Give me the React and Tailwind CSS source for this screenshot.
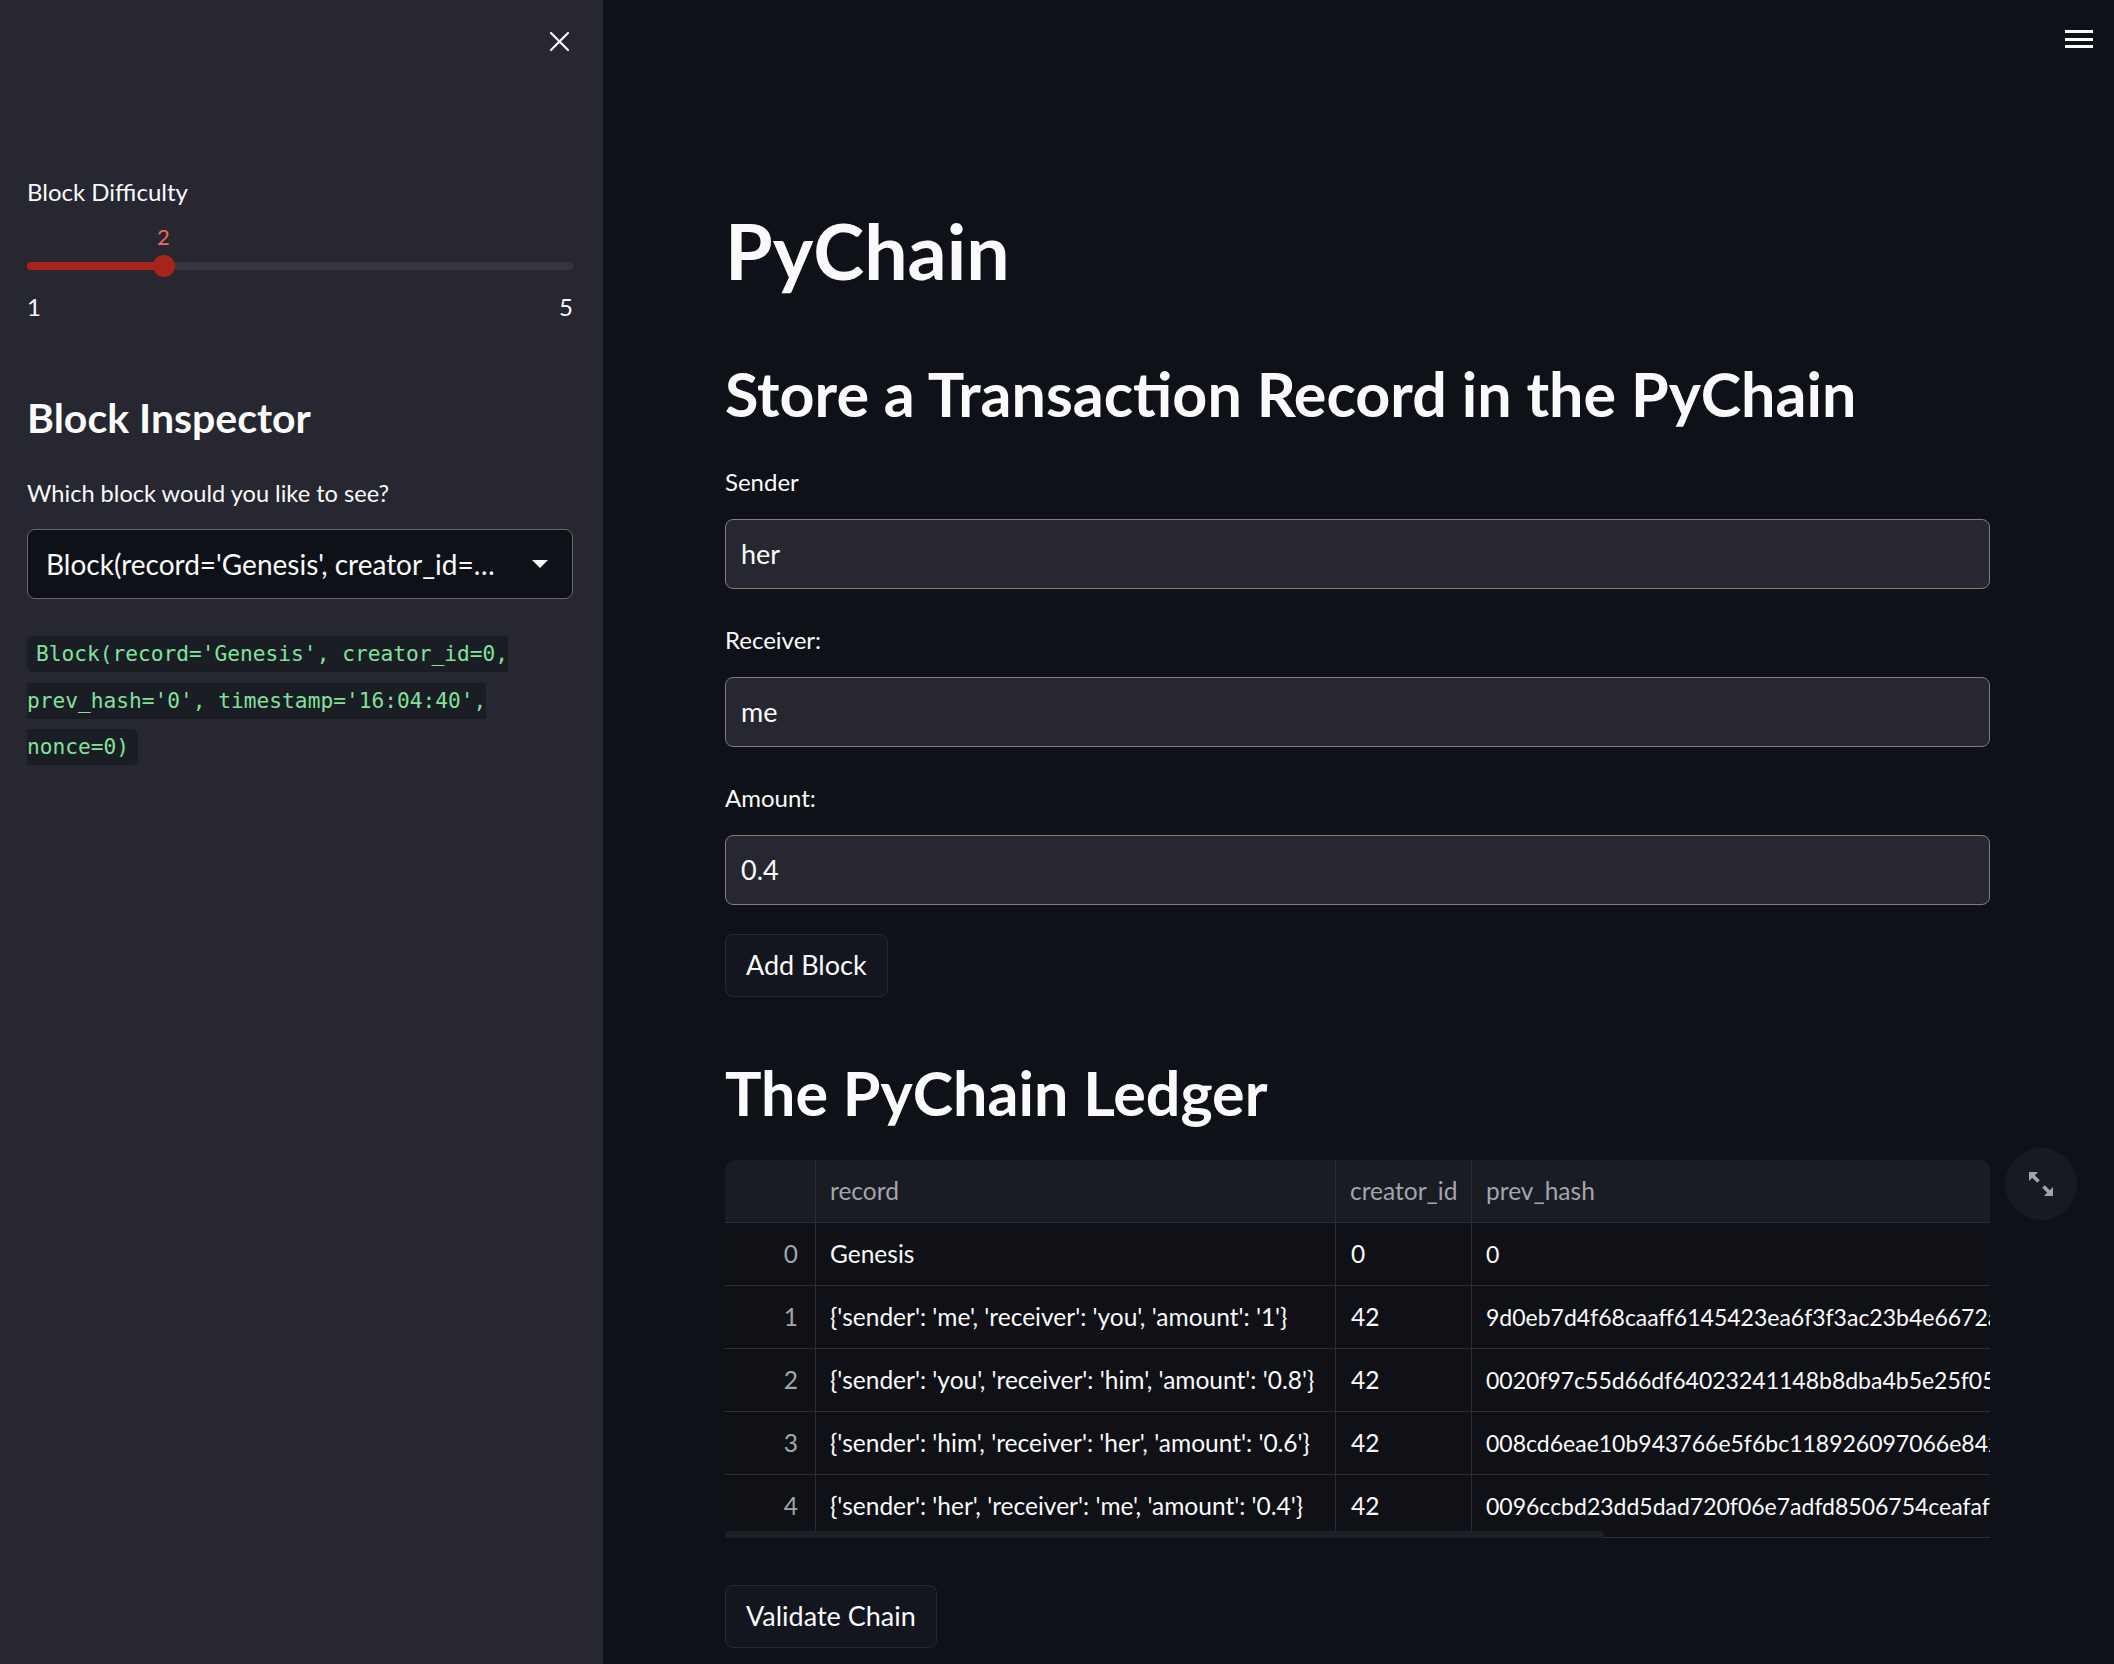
import { useState } from 'react'

const ledger = [
  { id: 0, record: 'Genesis', creator: '0', hash: '0' },
  { id: 1, record: "{'sender': 'me', 'receiver': 'you', 'amount': '1'}", creator: '42', hash: '9d0eb7d4f68caaff6145423ea6f3f3ac23b4e6672a81c0e7' },
  { id: 2, record: "{'sender': 'you', 'receiver': 'him', 'amount': '0.8'}", creator: '42', hash: '0020f97c55d66df64023241148b8dba4b5e25f0566d1e2b9' },
  { id: 3, record: "{'sender': 'him', 'receiver': 'her', 'amount': '0.6'}", creator: '42', hash: '008cd6eae10b943766e5f6bc118926097066e84283a7f1c0' },
  { id: 4, record: "{'sender': 'her', 'receiver': 'me', 'amount': '0.4'}", creator: '42', hash: '0096ccbd23dd5dad720f06e7adfd8506754ceafaf2b94d71' },
]

function TextField({ label, value }) {
  return (
    <div className="flex flex-col">
      <label className="text-[24px] leading-[30px] text-[#fafafa]">{label}</label>
      <div className="mt-[22px] h-[70px] rounded-[8px] border border-[#857d6e] bg-[#262730] px-[15px] flex items-center">
        <span className="text-[27px]">{value}</span>
      </div>
    </div>
  )
}

function Slider({ value, min, max }) {
  const pct = ((value - min) / (max - min)) * 100
  return (
    <div className="flex flex-col">
      <div className="relative h-[24px] mt-[16px]">
        <span
          className="absolute top-0 -translate-x-1/2 text-[22px] leading-[24px] text-[#f0675f]"
          style={{ left: `${pct}%` }}
        >
          {value}
        </span>
      </div>
      <div className="relative mt-[6px] h-[22px] flex items-center">
        <div className="h-[8px] w-full rounded-full bg-[#34353d]">
          <div className="h-full rounded-full bg-[#a8231b]" style={{ width: `${pct}%` }} />
        </div>
        <div
          className="absolute top-0 h-[22px] w-[22px] -translate-x-1/2 rounded-full bg-[#a8231b]"
          style={{ left: `${pct}%` }}
        />
      </div>
      <div className="mt-[15px] flex justify-between text-[24px] leading-[30px]">
        <span>{min}</span>
        <span>{max}</span>
      </div>
    </div>
  )
}

function Sidebar() {
  const [block] = useState("Block(record='Genesis', creator_id=…")
  return (
    <aside className="w-[603px] shrink-0 bg-[#262730] pl-[27px] pr-[30px]">
      <div className="flex justify-end pt-[31px] pr-[3px]">
        <svg width="21" height="21" viewBox="0 0 21 21" stroke="#fafafa" strokeWidth="2.2" strokeLinecap="round">
          <path d="M2 2l17 17M19 2L2 19" />
        </svg>
      </div>

      <div className="mt-[123px] text-[24px] leading-[34px]">Block Difficulty</div>
      <Slider value={2} min={1} max={5} />

      <h2 className="mt-[71px] text-[41px] leading-[50px] font-bold">Block Inspector</h2>
      <div className="mt-[33px] text-[23.6px] leading-[34px]">Which block would you like to see?</div>
      <div className="mt-[19px] h-[70px] rounded-[8px] border border-[#6e685c] bg-[#0e1117] pl-[18px] pr-[24px] flex items-center justify-between">
        <span className="text-[28px] whitespace-nowrap">{block}</span>
        <svg width="16" height="8" viewBox="0 0 16 8">
          <path d="M0 0h16L8 8z" fill="#fafafa" />
        </svg>
      </div>

      {/* st.write(block) wraps onto three lines */}
      <div className="mt-[37px] flex flex-col items-start gap-[10.5px] font-['DejaVu_Sans_Mono',monospace] text-[21.2px] leading-[36px] text-[#80e29b]">
        <span className="h-[36px] rounded-l-[6px] bg-[#1b1d24] pl-[9px] whitespace-pre">Block(record='Genesis', creator_id=0,</span>
        <span className="h-[36px] bg-[#1b1d24] whitespace-pre">prev_hash='0', timestamp='16:04:40',</span>
        <span className="h-[36px] rounded-r-[6px] bg-[#1b1d24] pr-[9px] whitespace-pre">nonce=0)</span>
      </div>
    </aside>
  )
}

function ExpandIcon() {
  return (
    <svg width="26" height="26" viewBox="0 0 26 26" fill="#a4a4a6">
      <path d="M1 1h9l-3.2 3.2 5 5-2.6 2.6-5-5L1 10z" />
      <path d="M25 25h-9l3.2-3.2-5-5 2.6-2.6 5 5L25 16z" />
    </svg>
  )
}

function Ledger() {
  return (
    <div className="relative mt-[31px]">
      <div className="overflow-hidden rounded-t-[10px] text-[24.5px]">
        <div className="grid grid-cols-[91px_520px_136px_1fr] h-[63px] bg-[#1a1c23] border-b border-[#2c2e36] text-[#a3a5ad]">
          <div className="border-r border-[#2c2e36]" />
          <div className="border-r border-[#2c2e36] pl-[14px] flex items-center">record</div>
          <div className="border-r border-[#2c2e36] pl-[14px] flex items-center whitespace-nowrap">creator_id</div>
          <div className="pl-[14px] flex items-center">prev_hash</div>
        </div>
        {ledger.map(row => (
          <div key={row.id} className="grid grid-cols-[91px_520px_136px_1fr] h-[63px] bg-[#0f1117] border-b border-[#2c2e36]">
            <div className="border-r border-[#2c2e36] pr-[17px] flex items-center justify-end text-[#a3a5ad]">{row.id}</div>
            <div className="border-r border-[#2c2e36] pl-[14px] flex items-center whitespace-nowrap overflow-hidden">{row.record}</div>
            <div className="border-r border-[#2c2e36] pl-[15px] flex items-center">{row.creator}</div>
            <div className="pl-[14px] flex items-center whitespace-nowrap overflow-hidden text-[23px]">{row.hash}</div>
          </div>
        ))}
      </div>
      {/* horizontal scrollbar of the data grid */}
      <div className="absolute bottom-0 left-0 h-[7px] w-[879px] rounded-full bg-[#1d1f26]" />

      <button className="absolute -top-[12px] -right-[87px] h-[72px] w-[72px] rounded-full bg-[#161a23] flex items-center justify-center">
        <ExpandIcon />
      </button>
    </div>
  )
}

export default function App() {
  return (
    <div className="flex h-screen w-full overflow-hidden bg-[#0e1117] text-[#fafafa] font-['Lato',sans-serif]">
      <Sidebar />
      <main className="relative flex-1 min-w-0">
        <div className="absolute top-[30px] right-[21px] flex flex-col gap-[4.5px]">
          <span className="block h-[3px] w-[28px] bg-[#fafafa]" />
          <span className="block h-[3px] w-[28px] bg-[#fafafa]" />
          <span className="block h-[3px] w-[28px] bg-[#fafafa]" />
        </div>

        <div className="ml-[122px] w-[1265px] pt-[205px]">
          <h1 className="text-[77px] leading-[90px] font-bold">PyChain</h1>
          <h2 className="mt-[63px] text-[61px] leading-[72px] font-bold">Store a Transaction Record in the PyChain</h2>

          <div className="mt-[37px] flex flex-col gap-[36px]">
            <TextField label="Sender" value="her" />
            <TextField label="Receiver:" value="me" />
            <TextField label="Amount:" value="0.4" />
          </div>

          <button className="mt-[29px] h-[63px] rounded-[8px] border border-[#252933] bg-[#13161e] px-[20px] text-[27px]">
            Add Block
          </button>

          <h2 className="mt-[60px] text-[61px] leading-[72px] font-bold">The PyChain Ledger</h2>
          <Ledger />

          <button className="mt-[47px] h-[63px] rounded-[8px] border border-[#252933] bg-[#13161e] px-[20px] text-[27px]">
            Validate Chain
          </button>
        </div>
      </main>
    </div>
  )
}
